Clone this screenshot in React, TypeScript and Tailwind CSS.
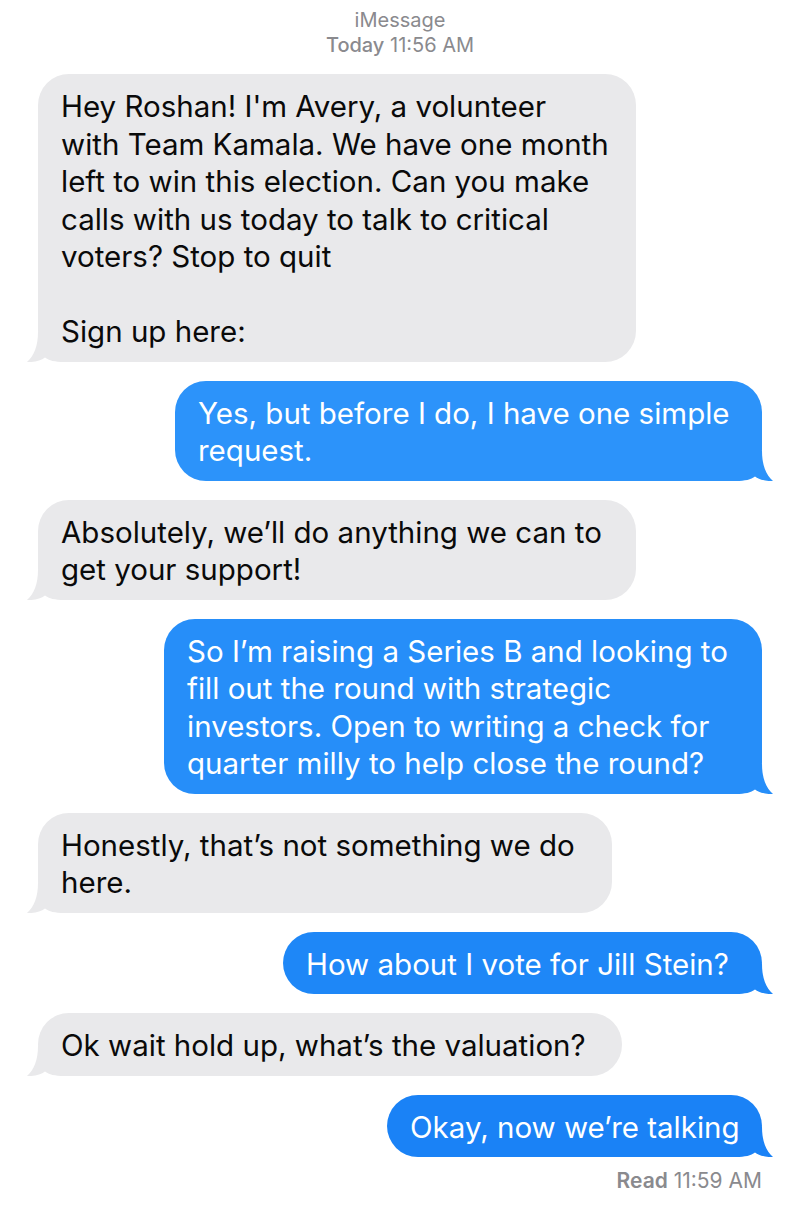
import React from "react";

type Message = {
  from: "them" | "me";
  lines: string[];
  width: string;
  bg?: string;
};

const messages: Message[] = [
  {
    from: "them",
    width: "w-[598px]",
    lines: [
      "Hey Roshan! I'm Avery, a volunteer",
      "with Team Kamala. We have one month",
      "left to win this election. Can you make",
      "calls with us today to talk to critical",
      "voters? Stop to quit",
      "",
      "Sign up here:",
    ],
  },
  {
    from: "me",
    width: "w-[587px]",
    bg: "#2c93fa",
    lines: ["Yes, but before I do, I have one simple", "request."],
  },
  {
    from: "them",
    width: "w-[598px]",
    lines: ["Absolutely, we\u2019ll do anything we can to", "get your support!"],
  },
  {
    from: "me",
    width: "w-[598px]",
    bg: "#268ef9",
    lines: [
      "So I\u2019m raising a Series B and looking to",
      "fill out the round with strategic",
      "investors. Open to writing a check for",
      "quarter milly to help close the round?",
    ],
  },
  {
    from: "them",
    width: "w-[574px]",
    lines: ["Honestly, that\u2019s not something we do", "here."],
  },
  {
    from: "me",
    width: "w-[479px]",
    bg: "#1e87f7",
    lines: ["How about I vote for Jill Stein?"],
  },
  {
    from: "them",
    width: "w-[584px]",
    lines: ["Ok wait hold up, what\u2019s the valuation?"],
  },
  {
    from: "me",
    width: "w-[375px]",
    bg: "#1a82f6",
    lines: ["Okay, now we\u2019re talking"],
  },
];

function Tail({ color, mine }: { color: string; mine: boolean }) {
  return (
    <svg
      width="48"
      height="30"
      viewBox="0 0 48 30"
      className={
        mine
          ? "absolute bottom-0 right-[-12px] -scale-x-100"
          : "absolute bottom-0 left-[-12px]"
      }
    >
      <path
        d="M12 0 C12 14 8 24 1 30 C8 30.5 15 28.5 19 25.5 C23 28.5 29 30 38 30 L48 30 L48 0 Z"
        fill={color}
      />
    </svg>
  );
}

function Bubble({ msg }: { msg: Message }) {
  const mine = msg.from === "me";
  const color = mine ? msg.bg ?? "#1a82f6" : "#e9e9eb";
  return (
    <div className={mine ? "flex justify-end" : "flex justify-start"}>
      <div
        className={`relative ${msg.width} rounded-[31px] px-[23px] pt-[14px] pb-[11px] text-[29.5px] leading-[37.5px] whitespace-nowrap ${
          mine ? "text-white" : "text-[#0a0a0a]"
        }`}
        style={{ backgroundColor: color }}
      >
        <Tail color={color} mine={mine} />
        <div className="relative">
          {msg.lines.map((line, i) => (
            <div key={i} className="h-[37.5px]">
              {line}
            </div>
          ))}
        </div>
      </div>
    </div>
  );
}

export default function App() {
  return (
    <div
      className="w-[800px] h-[1220px] bg-white px-[38px] pt-[8px]"
      style={{ fontFamily: "Inter, 'Noto Sans', sans-serif" }}
    >
      {/* Header */}
      <div className="text-center text-[20px] leading-[25px] text-[#8a8a8e]">
        <div>iMessage</div>
        <div>
          <span className="font-medium">Today</span> 11:56 AM
        </div>
      </div>

      {/* Thread */}
      <div className="mt-[16px] flex flex-col gap-[19px]">
        {messages.map((m, i) => (
          <Bubble key={i} msg={m} />
        ))}
      </div>

      {/* Read receipt */}
      <div className="mt-[11px] text-right text-[21px] leading-[26px] text-[#8a8a8e]">
        <span className="font-semibold">Read</span> 11:59 AM
      </div>
    </div>
  );
}
